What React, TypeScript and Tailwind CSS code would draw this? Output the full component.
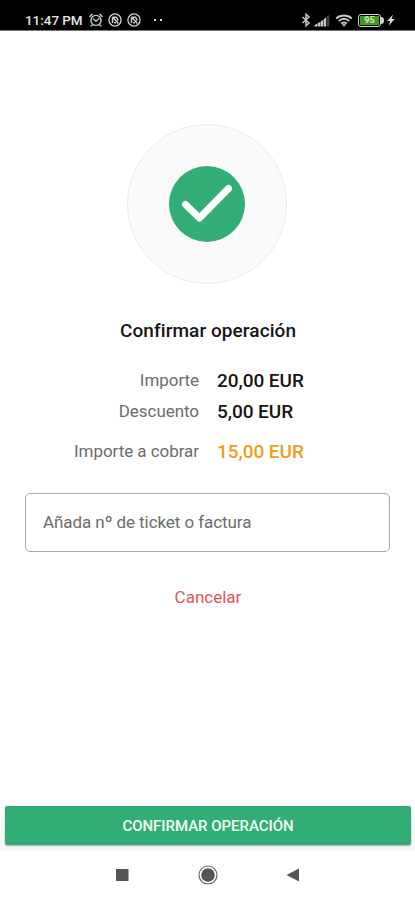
import React from 'react';

const AlarmIcon = () => (
  <svg viewBox="0 0 14 14" className="w-[14px] h-[14px]" fill="none" stroke="#c9c9c9" strokeWidth="1.4" strokeLinecap="round">
    <circle cx="7" cy="7.4" r="5" />
    <path d="M.9 3.4 3.2 1.2M13.1 3.4 10.8 1.2M4.4 6 7 8.2 9.8 5.8M3 12.2 2.2 13M11 12.2 11.8 13" />
  </svg>
);

const NoticeIcon = () => (
  <svg viewBox="0 0 14 14" className="w-[14px] h-[14px]" fill="none" stroke="#d2d2d2">
    <circle cx="7" cy="7" r="6.1" strokeWidth="1.3" />
    <path d="M4.5 10V4.4M4.4 4.2H8.2Q10 5 9.8 7.8M5 4.6 10.4 10.4M6.2 9.8H8" strokeWidth="1.5" />
  </svg>
);

const StatusBar: React.FC = () => (
  <header className="flex h-[31px] items-start justify-between border-b border-[#777] bg-black pl-[25px] pr-[20px] pt-[12px]">
    <div className="flex h-4 items-center">
      <span className="w-[58px] whitespace-nowrap text-[13.5px] font-medium leading-4 tracking-[-0.05px] text-[#e4e4e4]">11:47 PM</span>
      <div className="ml-[6px] flex items-center gap-[5px]">
        <AlarmIcon />
        <NoticeIcon />
        <NoticeIcon />
      </div>
      <div className="ml-[13px] flex gap-[4px]">
        <span className="size-[2px] bg-[#ddd]"></span>
        <span className="size-[2px] bg-[#ddd]"></span>
      </div>
    </div>

    <div className="flex h-4 items-center">
      {/* Bluetooth */}
      <svg viewBox="0 0 10 14" className="w-[10px] h-[14px]" fill="none" stroke="#c4c4c4" strokeWidth="1.5">
        <path d="M1.5 4 8 10 5 12.8V1.2L8 4 1.5 10" />
      </svg>
      {/* Signal */}
      <svg viewBox="0 0 16 13" className="ml-[3px] w-[16px] h-[13px]">
        <path d="M.5 12.5V11L3.4 9.6V12.5ZM3.8 12.5V9.2L6.4 7.8V12.5ZM6.8 12.5V7.4L9.3 5.8V12.5ZM9.8 12.5V5L12.2 3.2V12.5Z" fill="#c4c4c4" />
        <path d="M13 12.5V2.6L15.3 1V12.5Z" fill="#444" />
      </svg>
      {/* Wifi */}
      <svg viewBox="0 0 18 13" className="ml-[5px] w-[18px] h-[13px]" fill="none" stroke="#c4c4c4" strokeWidth="2">
        <path d="M1.2 4.4C5.6.4 12.4.4 16.8 4.4M3.8 7.1C7 4.2 11 4.2 14.2 7.1M6.2 9.6C8 8.1 10 8.1 11.8 9.6" />
        <path d="M7 10.6 9 12.8 11 10.6Q9 9.4 7 10.6Z" fill="#c4c4c4" stroke="none" />
      </svg>
      {/* Battery */}
      <div className="ml-[5px] flex items-center">
        <div className="flex h-[13px] w-[23px] items-center justify-center rounded-[3px] border border-[#d0d0d0] p-[1px]">
          <span className="flex h-full w-full items-center justify-center bg-[#43961f] text-[9px] font-bold leading-none text-[#c9f0b0]">95</span>
        </div>
        <span className="h-[7px] w-[3px] rounded-r-full bg-[#d0d0d0]"></span>
      </div>
      <svg viewBox="0 0 8 12" className="ml-[3px] w-[8px] h-[12px]" fill="#d8d8d8">
        <path d="M5.9.5.3 7H3.1L1.8 11.5 7.8 5H4.7Z" />
      </svg>
    </div>
  </header>
);

const App: React.FC = () => {
  return (
    <div className="flex h-[900px] w-full flex-col bg-white font-[Roboto,sans-serif]">
      <StatusBar />

      <main className="flex flex-1 flex-col items-center">
        {/* Success badge */}
        <div className="mt-[93px] mr-px flex size-[160px] items-center justify-center rounded-full border border-[#ebebeb] bg-[#fafafa]">
          <svg viewBox="0 0 76 76" className="size-[76px]">
            <circle cx="38" cy="38" r="38" fill="#32ad76" />
            <path d="M16.5 38.5 30.5 52 59.5 22.5" fill="none" stroke="#fff" strokeWidth="7" strokeLinecap="round" strokeLinejoin="round" />
          </svg>
        </div>

        <h1 className="mt-[35px] ml-px text-[19px] font-medium leading-6 tracking-[0.08px] text-[#161616]">Confirmar operación</h1>

        <dl className="mt-[26px] grid w-full grid-cols-[199px_1fr] gap-x-[18px] leading-6">
          <dt className="h-[31px] text-right text-[17px] leading-[22px] tracking-[-0.05px] text-[#6c6c6c]">Importe</dt>
          <dd className="h-[31px] text-[19px] font-medium tracking-[-0.05px] text-[#161616]">20,00 EUR</dd>
          <dt className="h-10 text-right text-[17px] leading-[22px] tracking-[-0.05px] text-[#6c6c6c]">Descuento</dt>
          <dd className="h-10 text-[19px] font-medium tracking-[-0.05px] text-[#161616]">5,00 EUR</dd>
          <dt className="text-right text-[17px] leading-[22px] tracking-[-0.05px] text-[#6c6c6c]">Importe a cobrar</dt>
          <dd className="text-[19px] font-medium tracking-[-0.05px] text-[#f49b1b]">15,00 EUR</dd>
        </dl>

        <div className="mt-[29px] w-full px-[25px]">
          <input
            type="text"
            placeholder="Añada nº de ticket o factura"
            className="h-[59px] w-full rounded-[5px] border border-[#a8a8a8] px-[17px] pb-[2px] text-[17px] tracking-[-0.07px] text-[#333] outline-none placeholder:text-[#6c6c6c]"
          />
        </div>

        <button className="mt-[33px] ml-px text-[17px] leading-6 text-[#e15658]">Cancelar</button>
      </main>

      <div className="h-[45px] bg-gradient-to-b from-white to-[#f8f8fa] pl-[5px] pr-[4px]">
        <button className="h-[39px] w-full rounded-[2px] bg-[#32ad76] pt-px text-[15px] font-medium tracking-[-0.03px] text-[#f2fff8] shadow-[0_1px_2px_rgba(0,0,0,0.3)]">
          CONFIRMAR OPERACIÓN
        </button>
      </div>

      {/* Android navigation */}
      <nav className="flex h-[49px] items-center justify-center gap-[68px] pb-px">
        <svg viewBox="0 0 14 14" className="size-[14px]">
          <rect x="0" y="1" width="12.5" height="12" fill="#555" />
        </svg>
        <svg viewBox="0 0 20 20" className="size-5">
          <circle cx="10" cy="10" r="9" fill="none" stroke="#666" strokeWidth="1.2" />
          <circle cx="10" cy="10" r="6.8" fill="#555" />
        </svg>
        <svg viewBox="0 0 14 14" className="size-[14px]">
          <path d="M.5 7 13 .5V13.5Z" fill="#555" />
        </svg>
      </nav>
    </div>
  );
};

export default App;
